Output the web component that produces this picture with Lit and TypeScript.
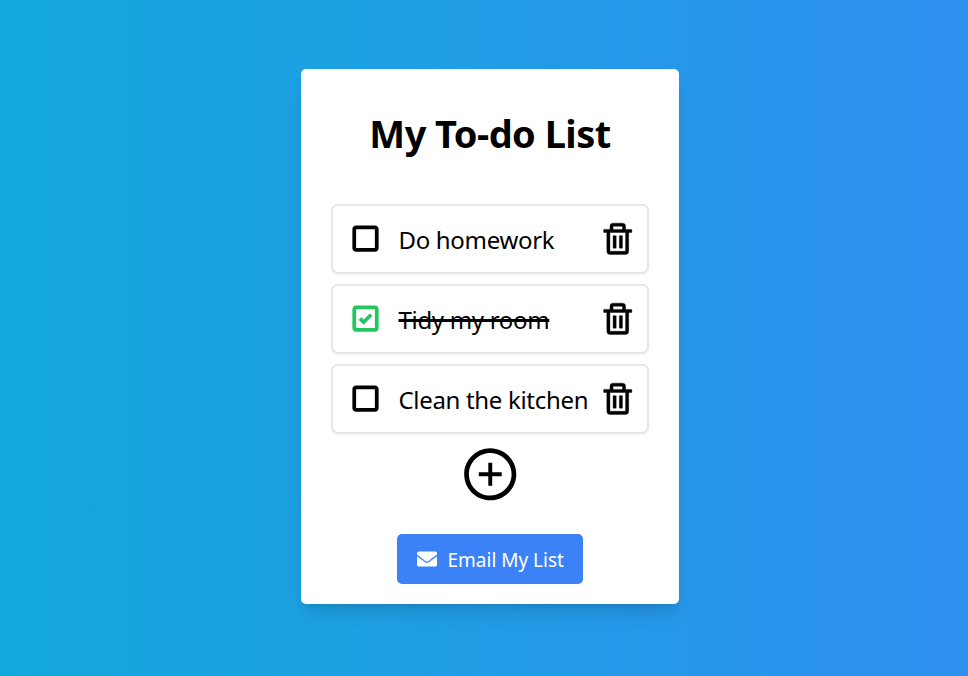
import { LitElement, html, css, svg } from "lit";
import { customElement, property } from "lit/decorators.js";
import { classMap } from "lit/directives/class-map.js";

interface Todo {
  text: string;
  done: boolean;
}

@customElement("todo-item")
class TodoItem extends LitElement {
  @property({ type: Boolean }) done = false;
  @property() text = "";

  static styles = css`
    :host {
      display: block;
    }
    .item {
      box-sizing: border-box;
      height: 70px;
      display: flex;
      align-items: center;
      border: 2px solid #e5e7eb;
      border-radius: 7px;
      padding: 0 10.5px 2px 10px;
      box-shadow: 0 1px 2px rgba(0, 0, 0, 0.05);
    }
    .box {
      width: 45px;
      height: 45px;
      flex: none;
    }
    .box.done {
      color: #22c55e;
    }
    .label {
      flex: 1;
      min-width: 0;
      display: flex;
      margin-left: 10.5px;
      padding-top: 3px;
      font-size: 24px;
      line-height: 36px;
      letter-spacing: -0.32px;
      white-space: nowrap;
    }
    .label.done {
      text-decoration: line-through;
      text-decoration-thickness: 3px;
    }
    .trash {
      width: 37.5px;
      height: 37.5px;
      flex: none;
      margin-top: 0.5px;
      stroke: currentColor;
      stroke-width: 0.25;
    }
  `;

  render() {
    const state = { done: this.done };
    return html`<div class="item">
      <svg class=${classMap({ box: true, ...state })} viewBox="0 0 24 24" fill="currentColor">
        <path d="M7 5c-1.103 0-2 .897-2 2v10c0 1.103.897 2 2 2h10c1.103 0 2-.897 2-2V7c0-1.103-.897-2-2-2H7zm0 12V7h10l.002 10H7z" />
        ${this.done
          ? svg`<path d="M10.996 12.556 9.7 11.285l-1.4 1.43 2.704 2.647 4.699-4.651-1.406-1.422z" />`
          : null}
      </svg>
      <span class=${classMap({ label: true, ...state })}><span>${this.text}</span></span>
      <svg class="trash" viewBox="0 0 24 24" fill="currentColor">
        <path d="M5 20a2 2 0 0 0 2 2h10a2 2 0 0 0 2-2V8h2V6h-4V4a2 2 0 0 0-2-2H9a2 2 0 0 0-2 2v2H3v2h2zM9 4h6v2H9zM8 8h9v12H7V8z" />
        <path d="M9 10h2v8H9zm4 0h2v8h-2z" />
      </svg>
    </div>`;
  }
}

@customElement("app-root")
class AppRoot extends LitElement {
  private todos: Todo[] = [
    { text: "Do homework", done: false },
    { text: "Tidy my room", done: true },
    { text: "Clean the kitchen", done: false },
  ];

  static styles = css`
    :host {
      display: flex;
      justify-content: center;
      align-items: flex-start;
      box-sizing: border-box;
      height: 100vh;
      padding: 69px 0 0 12px;
      overflow: hidden;
      background: linear-gradient(to right, #14a9dc, #2e8fef);
      font-family: "Noto Sans", "Open Sans", sans-serif;
      color: #000;
    }
    .card {
      box-sizing: border-box;
      width: 378px;
      height: 535px;
      padding: 0 30px;
      border-radius: 5px;
      background: #fff;
      box-shadow: 0 12px 19px -4px rgba(0, 0, 0, 0.12), 0 5px 8px -5px rgba(0, 0, 0, 0.1);
      display: flex;
      flex-direction: column;
      align-items: center;
    }
    h1 {
      margin: 37px 0 0;
      height: 98px;
      font-size: 38px;
      line-height: 54px;
      font-weight: 700;
      letter-spacing: -0.55px;
      white-space: nowrap;
    }
    .list {
      width: 318px;
      display: flex;
      flex-direction: column;
      gap: 10px;
    }
    .add {
      width: 62.5px;
      height: 62.5px;
      margin-top: 9px;
    }
    .email {
      box-sizing: border-box;
      width: 186px;
      height: 50px;
      margin: 28.5px 0 0;
      padding: 0 20px;
      border: 0;
      border-radius: 5px;
      background: #3b82f6;
      color: #fff;
      font: 19px/50px "Noto Sans", "Open Sans", sans-serif;
      white-space: nowrap;
      display: flex;
      align-items: center;
      gap: 10.5px;
    }
    .email span {
      padding-top: 1px;
    }
    .mail {
      width: 20px;
      height: 20px;
      flex: none;
    }
  `;

  render() {
    return html`<main class="card">
      <h1><span>My To-do List</span></h1>
      <div class="list">
        ${this.todos.map((t) => html`<todo-item .text=${t.text} .done=${t.done}></todo-item>`)}
      </div>
      <svg class="add" viewBox="0 0 24 24" fill="currentColor">
        <path d="M12.75 7.600h-1.5v3.650H7.600v1.500h3.650v3.650h1.500v-3.650h3.650v-1.500h-3.650z" />
        <path d="M12 2C6.486 2 2 6.486 2 12s4.486 10 10 10 10-4.486 10-10S17.514 2 12 2zm0 18.200c-4.521 0-8.200-3.679-8.200-8.200s3.679-8.200 8.200-8.200 8.200 3.679 8.200 8.200-3.679 8.200-8.200 8.200z" />
      </svg>
      <button class="email">
        <svg class="mail" viewBox="0 0 512 512" fill="currentColor">
          <path d="M502.3 190.800c3.900-3.100 9.700-.2 9.700 4.700V400c0 26.500-21.500 48-48 48H48c-26.500 0-48-21.500-48-48V195.600c0-5 5.700-7.800 9.700-4.700 22.400 17.400 52.100 39.500 154.100 113.600 21.100 15.400 56.700 47.800 92.200 47.600 35.700.3 72-32.800 92.300-47.600 102-74.100 131.600-96.300 154-113.700zM256 320c23.200.4 56.600-29.200 73.400-41.400 132.700-96.300 142.800-104.700 173.400-128.700 5.800-4.500 9.200-11.500 9.200-18.900v-19c0-26.500-21.500-48-48-48H48c-26.500 0-48 21.500-48 48v19c0 7.400 3.400 14.300 9.200 18.900 30.600 23.900 40.700 32.400 173.400 128.700 16.800 12.200 50.200 41.800 73.400 41.400z" />
        </svg>
        <span>Email My List</span>
      </button>
    </main>`;
  }
}
